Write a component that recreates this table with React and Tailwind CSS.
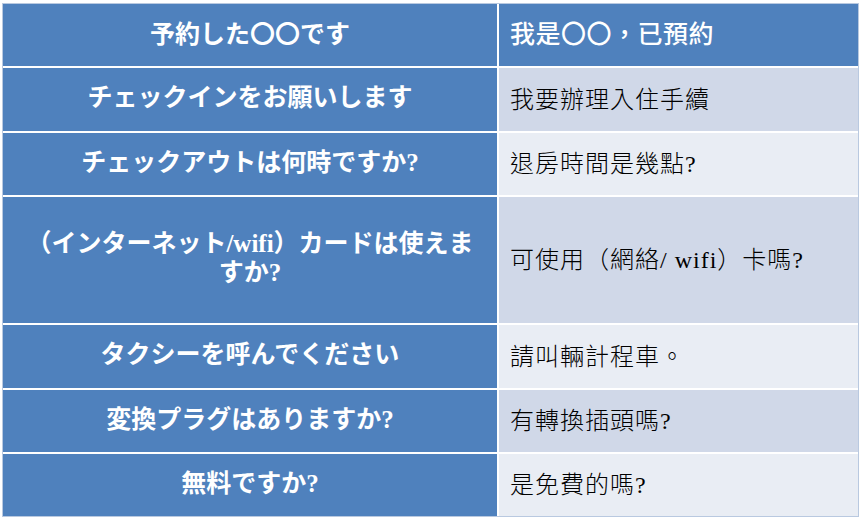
const rows = [
  { ja: 'チェックインをお願いします', zh: '我要辦理入住手續', bg: 'bg-[#d0d8e8]' },
  { ja: 'チェックアウトは何時ですか?', zh: '退房時間是幾點?', bg: 'bg-[#e9edf4]' },
  { ja: ['（インターネット/wifi）カードは使えま', 'すか?'], zh: '可使用（網絡/ wifi）卡嗎?', bg: 'bg-[#d0d8e8]' },
  { ja: 'タクシーを呼んでください', zh: '請叫輛計程車。', bg: 'bg-[#e9edf4]' },
  { ja: '変換プラグはありますか?', zh: '有轉換插頭嗎?', bg: 'bg-[#d0d8e8]' },
  { ja: '無料ですか?', zh: '是免費的嗎?', bg: 'bg-[#e9edf4]' },
]

const jaFont = "font-['Liberation_Serif','Noto_Sans_CJK_JP',serif]"
const zhFont = "font-['Liberation_Serif','Noto_Sans_CJK_TC',serif]"

function App() {
  return (
    <div className="h-[521px] w-[862px] bg-white pl-[2px] pt-[3px]">
      <div className="w-fit border border-[#b9c9e0]">
        <div className="grid grid-cols-[494px_359px] grid-rows-[62px_63px_62px_126px_63px_62px_62px] gap-[2px] bg-white">
          <div className={`flex items-center justify-center bg-[#4f81bd] text-[25px] font-semibold text-white ${jaFont}`}>
            予約した〇〇です
          </div>
          <div className={`flex items-center bg-[#4f81bd] pl-[11px] text-[25px] font-medium tracking-[0.5px] text-white ${zhFont}`}>
            我是〇〇，已預約
          </div>

          {rows.map((row, i) => (
            <div key={i} className="contents">
              <div className={`flex flex-col items-center justify-center bg-[#4f81bd] pb-[4px] text-center text-[25px] font-semibold leading-[29px] text-white ${jaFont}`}>
                {Array.isArray(row.ja) ? row.ja.map((line) => <span key={line}>{line}</span>) : row.ja}
              </div>
              <div className={`flex items-center ${row.bg} pl-[11px] text-[24px] font-light tracking-[1px] text-black ${zhFont}`}>
                {row.zh}
              </div>
            </div>
          ))}
        </div>
      </div>
    </div>
  )
}

export default App
